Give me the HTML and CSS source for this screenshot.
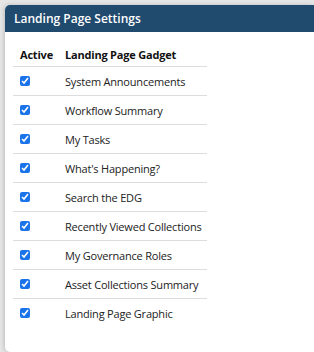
FILE: index.html
```html
<!DOCTYPE html>
<html>
<head>
<meta charset="utf-8">
<link rel="stylesheet" href="styles.css">
</head>
<body>
<div class="panel">
  <div class="header">Landing Page Settings</div>
  <div class="body">
    <table class="grid">
      <thead>
        <tr><th class="c1">Active</th><th>Landing Page Gadget</th></tr>
      </thead>
      <tbody>
        <tr><td class="c1"><input type="checkbox" checked></td><td>System Announcements</td></tr>
        <tr><td class="c1"><input type="checkbox" checked></td><td>Workflow Summary</td></tr>
        <tr><td class="c1"><input type="checkbox" checked></td><td>My Tasks</td></tr>
        <tr><td class="c1"><input type="checkbox" checked></td><td>What's Happening?</td></tr>
        <tr><td class="c1"><input type="checkbox" checked></td><td>Search the EDG</td></tr>
        <tr><td class="c1"><input type="checkbox" checked></td><td>Recently Viewed Collections</td></tr>
        <tr><td class="c1"><input type="checkbox" checked></td><td>My Governance Roles</td></tr>
        <tr><td class="c1"><input type="checkbox" checked></td><td>Asset Collections Summary</td></tr>
        <tr><td class="c1"><input type="checkbox" checked></td><td>Landing Page Graphic</td></tr>
      </tbody>
    </table>
  </div>
</div>
</body>
</html>
```
FILE: styles.css
```css
html, body { margin: 0; padding: 0; }
body {
  background: #e6e6e6;
  font-family: "Open Sans", "Noto Sans", sans-serif;
  font-size: 11px;
  letter-spacing: -0.2px;
  color: #222;
  width: 314px;
  height: 352px;
  overflow: hidden;
}
.panel {
  margin: 5px 0 0 5px;
  width: 309px;
  height: 347px;
  background: #fff;
  border-radius: 5px 0 0 5px;
  box-shadow: -1px 0 4px rgba(0,0,0,0.18);
}
.header {
  background: #204a6e;
  color: #fff;
  font-weight: 600;
  font-size: 12px;
  letter-spacing: 0;
  height: 27px;
  line-height: 27px;
  padding-left: 9px;
  border-radius: 5px 0 0 0;
}
.body {
  padding: 11px 0 0 8px;
}
.grid {
  border-collapse: collapse;
  width: 194px;
}
.grid th {
  text-align: left;
  font-weight: 700;
  color: #111;
  height: 23px;
  padding: 0;
  border-bottom: 1px solid #ddd;
  vertical-align: middle;
  white-space: nowrap;
}
.grid td {
  height: 28px;
  padding: 0;
  border-bottom: 1px solid #ddd;
  vertical-align: middle;
  white-space: nowrap;
}
.grid tbody tr:last-child td { border-bottom: none; }
.grid .c1 { width: 45px; padding-left: 7px; }
.grid input {
  margin: 0;
  width: 10px;
  height: 10px;
  accent-color: #1a73e8;
  display: block;
}
```
